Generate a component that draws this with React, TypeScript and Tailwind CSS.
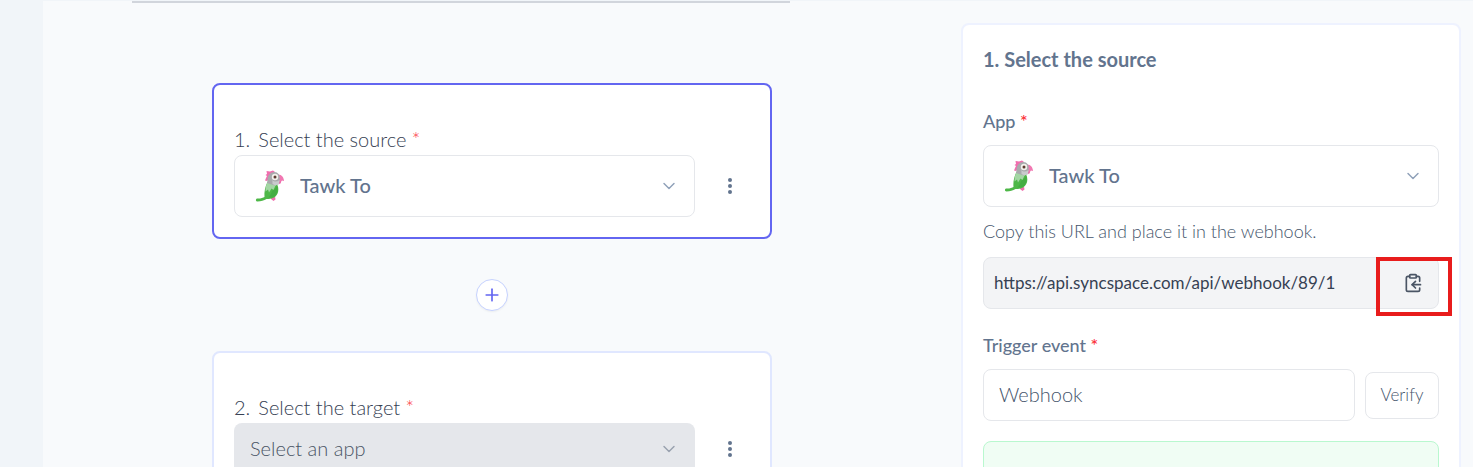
import { ChevronDown, ClipboardCopy, Plus } from "lucide-react";

function ParrotLogo() {
  return (
    <svg viewBox="0 0 30 32" className="h-8 w-[30px]" aria-hidden="true">
      <path d="M11 8 12 6l-1.500-1L12 4l-.5-3 3.500.5L18 .5l2 1.500-3 4-5 5-2-.5z" fill="#f06eae" />
      <path d="M22.500 4.500c4-.5 6.500 3 6.500 6.500l-2-.5-1.500 2-3-.5z" fill="#f178b2" />
      <path d="M24 12 26 11.500l-.5 2-2 .5z" fill="#ea5aa3" />
      <path d="M16 26.500h4l.5 3-2 1.500-2.500-2z" fill="#f06eae" />
      <path d="M12.500 12 22 14c2.500 5 1.500 11-3 13.500-2.500 1.500-5 1.500-7.500 1.500C9 30.500 6 31.500 2.500 31.500.5 31.500.5 29 2 28.500c3 .3 6-.5 7.500-1.500-.5-5 .5-10 3-15z" fill="#4eb848" />
      <path d="M12.500 12 21 14.500 18.500 20l-2-1.500-2.500 4-1-3-2.500 2c0-3.500.5-7 2-9.500z" fill="#a3d6a4" />
      <path d="M17 21c2-1 4-3 5-5 1.200 4 .5 8.500-3.500 11-2 .5-3.500.5-5 .5 1.500-2 3-4 3.500-6.500z" fill="#45ad43" />
      <path d="M12.500 10C12.500 5 15.500 2 19.500 2c3.500 0 5.500 3 5.300 6.500L24 14l-4 1.500-3.500-1L12 13z" fill="#a8aaac" />
      <path d="M17.500 10c1.500 2 4.500 2 7 0l-.5 4-3.500 1.500-3-1.500z" fill="#c9cbcd" />
      <circle cx="20" cy="7" r="3.200" fill="#f3efeb" />
      <circle cx="20" cy="7" r="1.500" fill="#5b3a2e" />
    </svg>
  );
}

function Required() {
  return <span className="text-red-500">*</span>;
}

function MoreButton() {
  return (
    <button
      type="button"
      aria-label="More options"
      className="flex size-10 items-center justify-center text-slate-500"
    >
      <svg viewBox="0 0 4 16" className="h-4 w-1" fill="currentColor" aria-hidden="true">
        <circle cx="2" cy="2" r="2" />
        <circle cx="2" cy="8" r="2" />
        <circle cx="2" cy="14" r="2" />
      </svg>
    </button>
  );
}

function AppSelect({ id }: { id: string }) {
  return (
    <div className="relative flex-1">
      <select
        id={id}
        className="h-[62px] w-full appearance-none rounded-lg border border-gray-200 bg-white pb-0.5 pl-[65px] text-xl font-medium text-slate-500"
      >
        <option>Tawk To</option>
      </select>
      <span className="pointer-events-none absolute inset-y-0 left-[21px] flex items-center">
        <ParrotLogo />
      </span>
      <ChevronDown
        className="pointer-events-none absolute inset-y-0 right-4 my-auto size-5 text-slate-400"
        strokeWidth={1.75}
      />
    </div>
  );
}

export default function App() {
  return (
    <div className="flex h-screen overflow-hidden bg-slate-50 font-['Lato',sans-serif]">
      <div className="w-[43px] shrink-0 bg-slate-100" />
      <div className="flex min-w-0 flex-1 flex-col">
        <div className="h-px shrink-0 bg-slate-100" />
        <div className="flex gap-5 pr-3">
          <main className="min-w-0 flex-1">
            <div className="mr-[151px] ml-[89px] h-0.5 bg-gray-300" />
            <div className="mx-auto flex max-w-[560px] flex-col items-center gap-10 pt-20">
              <section className="w-full rounded-lg border-2 border-[#6366f1] bg-white px-5 pt-10 pb-5">
                <label
                  htmlFor="source-app"
                  className="block pb-0.5 text-xl leading-7 font-light text-gray-700"
                >
                  1.<span className="ml-2">Select the source</span> <Required />
                </label>
                <div className="flex items-center gap-[15px]">
                  <AppSelect id="source-app" />
                  <MoreButton />
                </div>
              </section>

              <button
                type="button"
                aria-label="Add step"
                className="flex size-8 items-center justify-center rounded-full border border-indigo-200 bg-white text-[#6366f1] shadow-xs"
              >
                <Plus className="size-5" strokeWidth={2} />
              </button>

              <section className="w-full rounded-lg border-2 border-indigo-100 bg-white px-5 pt-10 pb-5">
                <label
                  htmlFor="target-app"
                  className="block pb-0.5 text-xl leading-7 font-light text-gray-700"
                >
                  2.<span className="ml-2">Select the target</span> <Required />
                </label>
                <div className="flex items-center gap-[15px]">
                  <div className="relative flex-1">
                    <select
                      id="target-app"
                      className="h-[52px] w-full appearance-none rounded-lg bg-gray-200 px-4 pb-0.5 text-xl font-light text-gray-600"
                    >
                      <option>Select an app</option>
                    </select>
                    <ChevronDown
                      className="pointer-events-none absolute inset-y-0 right-4 my-auto size-5 text-gray-400"
                      strokeWidth={1.75}
                    />
                  </div>
                  <MoreButton />
                </div>
              </section>
            </div>
          </main>

          <aside className="mt-[22px] w-[500px] shrink-0 rounded-lg border-2 border-indigo-50 bg-white px-5 pt-[18px] pb-5 text-lg leading-7 text-slate-500">
            <h2 className="text-xl leading-8 font-bold">1. Select the source</h2>

            <label htmlFor="panel-app" className="mt-8 mb-[10px] block font-medium">
              App <Required />
            </label>
            <div className="flex">
              <AppSelect id="panel-app" />
            </div>

            <label htmlFor="webhook-url" className="mt-[10px] mb-3 block font-light text-slate-600">
              Copy this URL and place it in the webhook.
            </label>
            <div className="relative flex h-[52px] rounded-lg border border-gray-200 bg-gray-100">
              <input
                id="webhook-url"
                readOnly
                value="https://api.syncspace.com/api/webhook/89/1"
                className="min-w-0 flex-1 bg-transparent pl-[10px] text-[17px] text-gray-700"
              />
              <button
                type="button"
                aria-label="Copy URL"
                className="flex w-[50px] items-center justify-center text-gray-600"
              >
                <ClipboardCopy className="size-5" strokeWidth={2} />
              </button>
              <div className="pointer-events-none absolute -top-px -right-[14px] h-[59px] w-[76px] border-4 border-[#e81c1c]" />
            </div>

            <label htmlFor="trigger-event" className="mt-[22px] mb-[10px] block font-medium">
              Trigger event <Required />
            </label>
            <div className="flex items-center gap-[10px]">
              <input
                id="trigger-event"
                defaultValue="Webhook"
                className="h-[52px] min-w-0 flex-1 rounded-lg border border-gray-200 px-[15px] pb-0.5 text-xl font-light text-slate-600"
              />
              <button
                type="button"
                className="h-[47px] w-[74px] rounded-lg border border-gray-200 text-[17px] font-light text-slate-600"
              >
                Verify
              </button>
            </div>
            <div className="mt-5 h-20 rounded-lg border border-green-200 bg-green-50" />
          </aside>
        </div>
      </div>
    </div>
  );
}
